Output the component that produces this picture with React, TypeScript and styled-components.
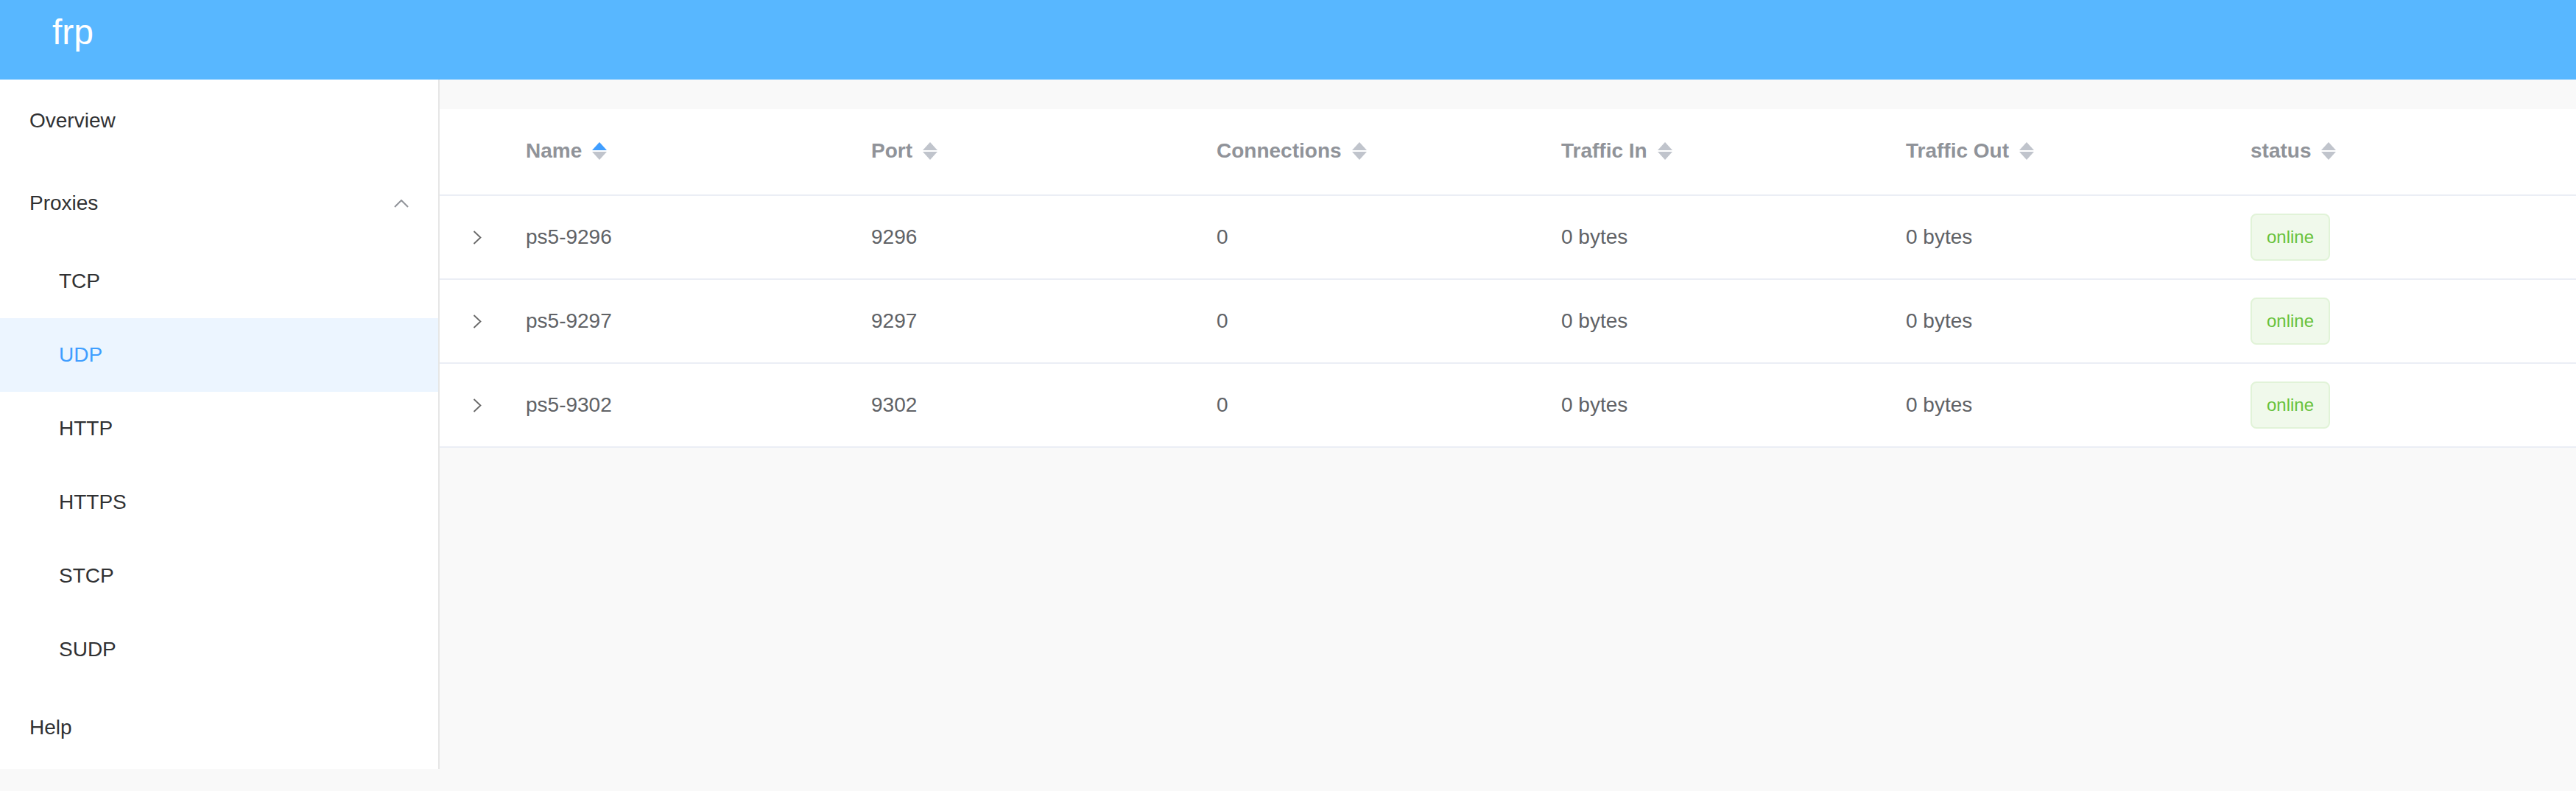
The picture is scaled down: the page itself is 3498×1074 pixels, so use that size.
import React from "react";
import styled, { createGlobalStyle } from "styled-components";

const GlobalStyle = createGlobalStyle`
  html, body {
    margin: 0;
    padding: 0;
    background: #f9f9f9;
    font-family: "Liberation Sans", Helvetica, Arial, sans-serif;
  }
  * { box-sizing: border-box; }
`;

const Page = styled.div`
  display: flex;
  flex-direction: column;
  min-height: 1074px;
  background: #f9f9f9;
`;

const TopBar = styled.header`
  height: 108px;
  background: #58b7ff;
  display: flex;
  align-items: flex-start;
  padding: 20px 0 0 71px;
`;

const Brand = styled.span`
  color: #ffffff;
  font-size: 48px;
  line-height: 48px;
`;

const Body = styled.div`
  display: flex;
  align-items: flex-start;
`;

const Sidebar = styled.nav`
  width: 597px;
  flex: none;
  background: #ffffff;
  border-right: 2px solid #e6e6e6;
  display: flex;
  flex-direction: column;
`;

const MenuItem = styled.div<{ $sub?: boolean; $active?: boolean }>`
  height: ${(p) => (p.$sub ? 100 : 112)}px;
  line-height: ${(p) => (p.$sub ? 100 : 112)}px;
  padding-left: ${(p) => (p.$sub ? 80 : 40)}px;
  padding-right: 40px;
  font-size: 28px;
  color: ${(p) => (p.$active ? "#409eff" : "#303133")};
  background: ${(p) => (p.$active ? "#ecf5ff" : "#ffffff")};
  display: flex;
  align-items: center;
  justify-content: space-between;
`;

const Main = styled.main`
  flex: 1;
  padding-top: 40px;
  min-width: 0;
`;

const Table = styled.div`
  background: #ffffff;
  display: flex;
  flex-direction: column;
`;

const cols = "97px 469px 469px 468px 468px 468px 1fr";

const HeadRow = styled.div`
  display: grid;
  grid-template-columns: ${cols};
  align-items: center;
  height: 118px;
  padding-bottom: 2px;
  border-bottom: 2px solid #ebeef5;
`;

const Row = styled.div`
  display: grid;
  grid-template-columns: ${cols};
  align-items: center;
  height: 114px;
  border-bottom: 2px solid #ebeef5;
`;

const HeadCell = styled.div`
  padding-left: 20px;
  font-size: 28px;
  font-weight: bold;
  color: #909399;
  display: flex;
  align-items: center;
  white-space: nowrap;
`;

const Cell = styled.div`
  padding-left: 20px;
  font-size: 28px;
  color: #606266;
  white-space: nowrap;
  display: flex;
  align-items: center;
`;

const ExpandCell = styled.div`
  display: flex;
  align-items: center;
  justify-content: center;
  padding-left: 4px;
`;

const Caret = styled.svg`
  margin-left: 14px;
  flex: none;
`;

const Tag = styled.span`
  display: inline-block;
  height: 64px;
  line-height: 60px;
  padding: 0 20px;
  font-size: 24px;
  color: #67c23a;
  background: #f0f9eb;
  border: 2px solid #e1f3d8;
  border-radius: 8px;
`;

const SortCaret = ({ active }: { active?: boolean }) => (
  <Caret width="20" height="24" viewBox="0 0 20 24">
    <polygon points="10,0 20,11 0,11" fill={active ? "#409eff" : "#c0c4cc"} />
    <polygon points="0,13 20,13 10,24" fill="#c0c4cc" />
  </Caret>
);

const ArrowUp = () => (
  <svg width="20" height="11" viewBox="0 0 20 11">
    <polyline points="1,10 10,1 19,10" fill="none" stroke="#909399" strokeWidth="2" />
  </svg>
);

const ArrowRight = () => (
  <svg width="12" height="19" viewBox="0 0 12 19">
    <polyline points="1.5,1 10.5,9.5 1.5,18" fill="none" stroke="#666666" strokeWidth="1.8" />
  </svg>
);

const headers = ["Name", "Port", "Connections", "Traffic In", "Traffic Out", "status"];

const rows = [
  { name: "ps5-9296", port: "9296" },
  { name: "ps5-9297", port: "9297" },
  { name: "ps5-9302", port: "9302" },
];

const subItems = ["TCP", "UDP", "HTTP", "HTTPS", "STCP", "SUDP"];

export default function App() {
  return (
    <Page>
      <GlobalStyle />
      <TopBar>
        <Brand>frp</Brand>
      </TopBar>
      <Body>
        <Sidebar>
          <MenuItem>Overview</MenuItem>
          <MenuItem>
            <span>Proxies</span>
            <ArrowUp />
          </MenuItem>
          {subItems.map((s) => (
            <MenuItem key={s} $sub $active={s === "UDP"}>
              {s}
            </MenuItem>
          ))}
          <MenuItem>Help</MenuItem>
        </Sidebar>
        <Main>
          <Table>
            <HeadRow>
              <div />
              {headers.map((h, i) => (
                <HeadCell key={h}>
                  {h}
                  <SortCaret active={i === 0} />
                </HeadCell>
              ))}
            </HeadRow>
            {rows.map((r) => (
              <Row key={r.name}>
                <ExpandCell>
                  <ArrowRight />
                </ExpandCell>
                <Cell>{r.name}</Cell>
                <Cell>{r.port}</Cell>
                <Cell>0</Cell>
                <Cell>0 bytes</Cell>
                <Cell>0 bytes</Cell>
                <Cell>
                  <Tag>online</Tag>
                </Cell>
              </Row>
            ))}
          </Table>
        </Main>
      </Body>
    </Page>
  );
}
